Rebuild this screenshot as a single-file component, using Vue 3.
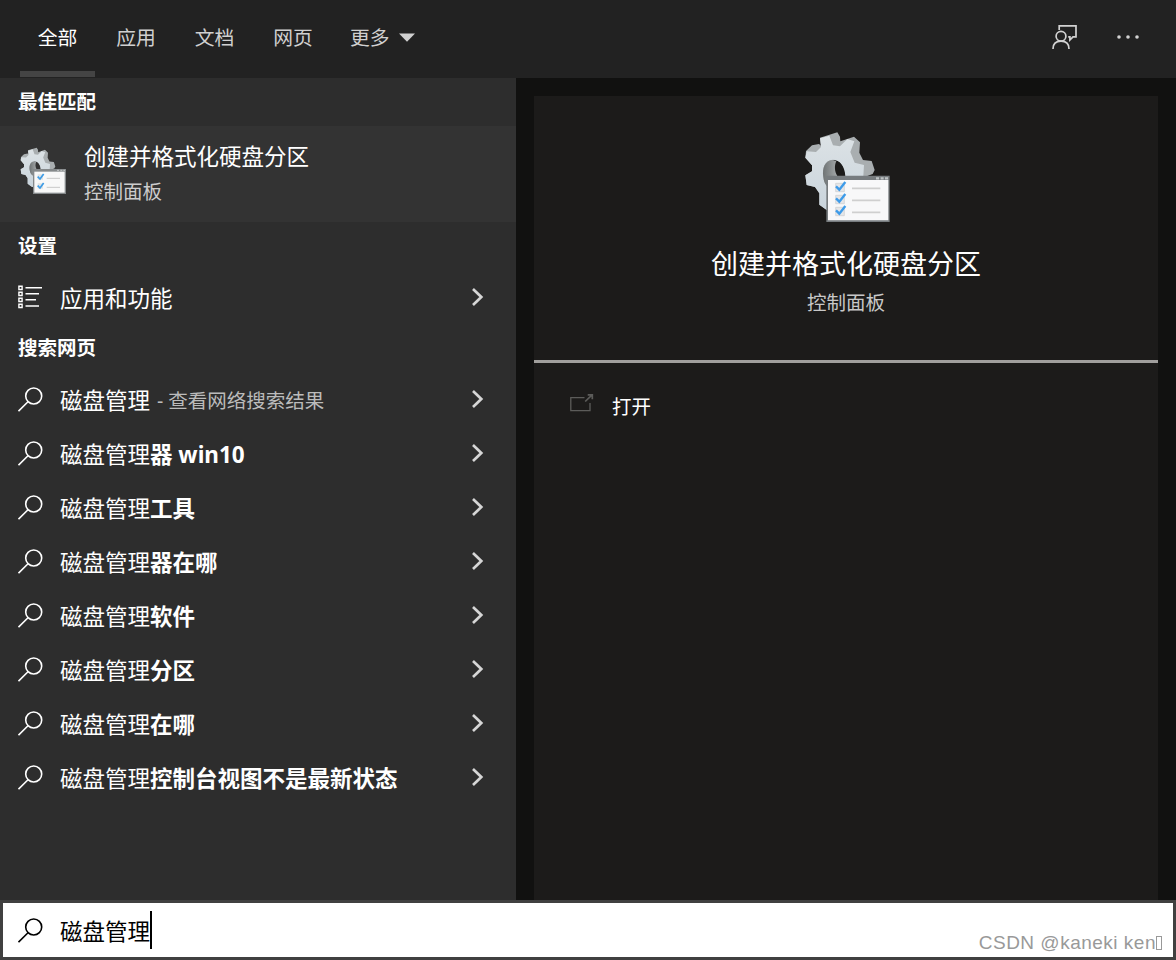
<script setup>
import { ref } from 'vue';

const tabs = ['全部', '应用', '文档', '网页'];
const activeTab = ref('全部');
const keyword = ref('磁盘管理');

const suggestions = [
  { extra: '', note: '查看网络搜索结果' },
  { extra: '器 win10' },
  { extra: '工具' },
  { extra: '器在哪' },
  { extra: '软件' },
  { extra: '分区' },
  { extra: '在哪' },
  { extra: '控制台视图不是最新状态' }
];
</script>

<template>
  <div class="search-window">
    <header class="topbar">
      <nav class="tabs">
        <button
          v-for="tab in tabs"
          :key="tab"
          class="tab"
          :class="{ active: tab === activeTab }"
          @click="activeTab = tab"
        >{{ tab }}</button>
        <button class="tab more">更多
          <svg class="caret" viewBox="0 0 16 9"><path d="M0 0.5H16L8 8.8Z" fill="currentColor" /></svg>
        </button>
      </nav>
      <div class="tools">
        <svg class="feedback" viewBox="0 0 26 26" fill="none" stroke="#d2d2d2" stroke-width="1.7">
          <path d="M7.2 6V1.9H24V12.8H21L17.9 16V12.8H16.2" />
          <circle cx="9" cy="12.2" r="4.9" />
          <path d="M1 25C1 20 4.2 17.2 9 17.2S17 20 17 25" />
        </svg>
        <svg class="dots" viewBox="0 0 24 6" fill="#d2d2d2">
          <circle cx="3" cy="3" r="1.8" />
          <circle cx="12" cy="3" r="1.8" />
          <circle cx="21" cy="3" r="1.8" />
        </svg>
      </div>
    </header>

    <main class="content">
      <section class="results">
        <h2 class="group">最佳匹配</h2>
        <div class="best">
          <svg class="best-icon" viewBox="60 74 141 144">
            <use href="#gear" transform="translate(24 42.5) scale(0.5)" />
            <path d="M99 140H198V215H99Z" fill="#85898b" />
            <path d="M103 148H194V211H103Z" fill="#f8f8f8" />
            <path d="M171 144H177M181 144H187M190 144H195" stroke="#c4c7c8" stroke-width="3" />
            <path d="M113 156H129V172H113ZM113 183H129V199H113Z" fill="#dfe3e5" />
            <path d="M140 168H180M140 195H180" stroke="#c8c8c8" stroke-width="3" />
            <path d="M113 163L120 170L131 155M113 190L120 197L131 182" fill="none" stroke="#3c9be6" stroke-width="5" />
          </svg>
          <div>
            <div class="best-title">创建并格式化硬盘分区</div>
            <div class="best-sub">控制面板</div>
          </div>
        </div>

        <h2 class="group">设置</h2>
        <div class="row">
          <svg class="row-icon" viewBox="0 0 25 25" fill="none" stroke="#fff" stroke-width="1.4">
            <path d="M0.9 1.3H4.1V4.5H0.9ZM0.9 7.3H4.1V10.5H0.9ZM0.9 13.3H4.1V16.5H0.9ZM0.9 19.3H4.1V22.5H0.9Z" />
            <path d="M7.5 2.7H24M7.5 8.7H21M7.5 14.7H18M7.5 21H21" />
          </svg>
          <span>应用和功能</span>
          <svg class="chevron" viewBox="0 0 14 20"><path d="M2 2L10.3 10L2 18" /></svg>
        </div>

        <h2 class="group">搜索网页</h2>
        <div v-for="item in suggestions" :key="item.extra" class="row">
          <svg class="row-icon" viewBox="0 0 25 25" fill="none" stroke="#fff" stroke-width="1.6">
            <circle cx="15.7" cy="9" r="8" />
            <path d="M10 14.7L0.5 24.2" />
          </svg>
          <span>磁盘管理<b v-if="item.extra">{{ item.extra }}</b></span>
          <span v-if="item.note" class="note">- {{ item.note }}</span>
          <svg class="chevron" viewBox="0 0 14 20"><path d="M2 2L10.3 10L2 18" /></svg>
        </div>
      </section>

      <section class="preview">
        <div class="card">
          <div class="hero">
            <svg class="hero-icon" viewBox="72 63 258 276">
              <defs>
                <linearGradient id="face" x1="0" y1="0" x2="0" y2="1">
                  <stop offset="0" stop-color="#dce2e5" />
                  <stop offset="1" stop-color="#c9d4dc" />
                </linearGradient>
                <linearGradient id="bore" x1="0" y1="0" x2="1" y2="0">
                  <stop offset="0" stop-color="#6f7475" />
                  <stop offset="1" stop-color="#a4a8a9" />
                </linearGradient>
                <symbol id="gear" viewBox="0 0 340 340" width="340" height="340">
                  <path fill="#a9aeb0" fill-rule="evenodd" d="M120 83L172 67L180 80L181 94L222 80L240 97L238 128L249 150L275 153L284 180L278 192L256 200V250H155V305L140 300L118 284V250L105 231L80 225L76 196L96 184V166L76 143L78 123L96 106L117 102L123 107ZM163 150C183 151 197 171 198 202H150C137 184 144 151 163 150Z" />
                  <path fill="url(#face)" fill-rule="evenodd" d="M120 85L148 77L159 106L180 109L202 87L223 94L211 126L224 158L252 165L250 198V250H155V305L140 300L118 284V250L105 231L80 225L76 196L96 184V166L76 143L80 124L108 126L123 111ZM158 149C134 151 126 174 130 201C133 225 145 237 160 237C185 237 197 223 196 197C194 168 179 148 158 149Z" />
                  <path fill="url(#bore)" d="M158 150C135 151 126 174 130 201C132 222 142 233 156 236L172 198C163 183 163 166 169 153Z" />
                </symbol>
              </defs>
              <use href="#gear" />
              <path d="M139 197H329V336H139Z" fill="#777c7f" />
              <path d="M144 210H325V331H144Z" fill="#f8f8f9" />
              <path d="M288 205H297M302 205H311M315 205H324" stroke="#bfc3c5" stroke-width="7" />
              <path d="M167 220H193V245H167ZM167 256H193V281H167ZM167 292H193V317H167Z" fill="#e5e6e8" stroke="#c9ccce" stroke-width="2" />
              <path d="M216 235H301M216 271H301M216 307H301" stroke="#cfcfcf" stroke-width="5" />
              <path d="M168 229L178 239L196 216M168 265L178 275L196 252M168 301L178 311L196 288" fill="none" stroke="#3d9be9" stroke-width="7" />
            </svg>
            <div class="hero-title">创建并格式化硬盘分区</div>
            <div class="hero-sub">控制面板</div>
          </div>
          <div class="action">
            <svg class="open-icon" viewBox="0 0 24 18" fill="none" stroke="#5c5c5a" stroke-width="1.3">
              <path d="M14.5 3.7H0.8V16.7H20V9" />
              <path d="M15.2 7.5L21.8 1.2M17.7 0.9H22.3V5.3" stroke-width="1.7" />
            </svg>
            <span>打开</span>
          </div>
        </div>
      </section>
    </main>

    <footer class="searchbar">
      <svg class="row-icon" viewBox="0 0 25 25" fill="none" stroke="#000" stroke-width="1.6">
        <circle cx="15.7" cy="9" r="8" />
        <path d="M10 14.7L0.5 24.2" />
      </svg>
      <span class="query">{{ keyword }}</span>
      <span class="cursor"></span>
      <span class="watermark">CSDN @kaneki ken<i class="box"></i></span>
    </footer>
  </div>
</template>

<style>
body {
  margin: 0;
  background: #111110;
}
</style>

<style scoped>
.search-window {
  width: 1176px;
  height: 960px;
  display: flex;
  flex-direction: column;
  overflow: hidden;
  color: #fff;
  font-family: "Noto Sans", "Noto Sans CJK SC", sans-serif;
  font-size: 22.5px;
}

svg {
  display: block;
  flex-shrink: 0;
}

.topbar {
  height: 78px;
  flex-shrink: 0;
  display: flex;
  justify-content: space-between;
  background: #222;
}

.tabs {
  display: flex;
  padding-left: 20px;
  gap: 3.5px;
}

.tab {
  box-sizing: border-box;
  width: 75px;
  height: 77px;
  padding: 4px 0 0;
  border: 0;
  border-bottom: 6px solid transparent;
  background: none;
  color: #d0d0d0;
  font-family: inherit;
  font-size: 19.8px;
  line-height: 67px;
  white-space: nowrap;
}

.tab.active {
  color: #fff;
  border-bottom-color: #444;
}

.tab.more {
  width: 100px;
  display: flex;
  align-items: center;
  padding-left: 16px;
}

.caret {
  width: 16px;
  height: 9px;
  margin-left: 9px;
}

.tools {
  display: flex;
  align-items: center;
  gap: 38px;
  padding-right: 36px;
  height: 74px;
}

.feedback {
  width: 26px;
  height: 26px;
}

.dots {
  width: 24px;
  height: 6px;
}

.content {
  display: flex;
  height: 822px;
  flex-shrink: 0;
}

.results {
  width: 516px;
  background: #2d2d2d;
}

.group {
  height: 48px;
  margin: 0;
  padding-left: 18px;
  font-size: 19.5px;
  line-height: 48px;
  font-weight: 700;
}

.best {
  height: 96px;
  display: flex;
  align-items: center;
  gap: 17px;
  padding-left: 20px;
  box-sizing: border-box;
  background: #333;
}

.best-icon {
  width: 47px;
  height: 48px;
  margin-bottom: 6px;
}

.best-title {
  line-height: 36px;
}

.best-sub {
  font-size: 19.5px;
  line-height: 34px;
  color: #ccc;
}

.row {
  height: 54px;
  display: flex;
  align-items: center;
  padding: 0 31px 0 18px;
  white-space: pre;
}

.row-icon {
  width: 25px;
  height: 25px;
  margin-right: 17px;
}

.note {
  margin-left: 7px;
  font-size: 19.5px;
  color: #bbb;
}

.chevron {
  width: 14px;
  height: 20px;
  margin-left: auto;
  fill: none;
  stroke: #d6d6d6;
  stroke-width: 2.7;
}

.preview {
  flex: 1;
  padding: 18px 18px 0;
  background: #111110;
}

.card {
  height: 100%;
  box-sizing: border-box;
  background: #1c1b1a;
}

.hero {
  height: 264px;
  display: flex;
  flex-direction: column;
  align-items: center;
  border-bottom: 3px solid #a19f9d;
}

.hero-icon {
  width: 86px;
  height: 92px;
  margin: 35px 0 21px 2px;
}

.hero-title {
  font-size: 27px;
  line-height: 40px;
}

.hero-sub {
  font-size: 19.5px;
  line-height: 37px;
  color: #c8c8c8;
}

.action {
  display: flex;
  align-items: center;
  height: 84px;
  padding-left: 36px;
  font-size: 19.5px;
}

.open-icon {
  width: 24px;
  height: 18px;
  margin: 0 18px 5px 0;
}

.searchbar {
  height: 60px;
  box-sizing: border-box;
  display: flex;
  align-items: center;
  padding: 0 11px 0 15px;
  border: 3px solid #404040;
  background: #fff;
  color: #000;
}

.cursor {
  width: 2px;
  height: 38px;
  background: #000;
}

.watermark {
  display: flex;
  align-items: center;
  margin-left: auto;
  padding-top: 26px;
  font-family: "Liberation Sans", sans-serif;
  font-size: 19px;
  letter-spacing: 0.5px;
  color: #999;
}

.box {
  box-sizing: border-box;
  width: 6px;
  height: 14px;
  border: 1px solid #999;
}
</style>
